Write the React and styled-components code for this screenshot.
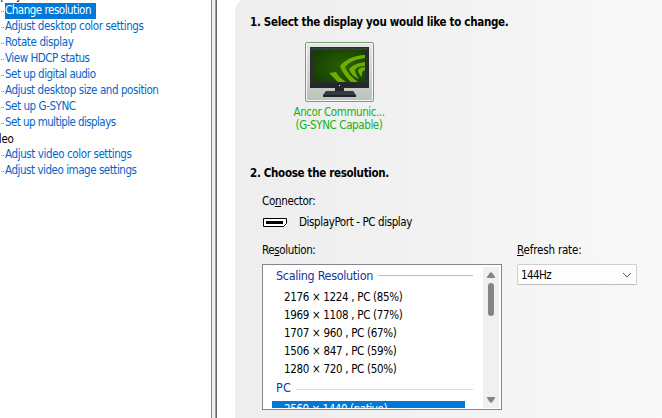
import React, { useLayoutEffect, useRef, useState } from "react";
import styled, { createGlobalStyle } from "styled-components";

const GlobalStyle = createGlobalStyle`
  * { box-sizing: border-box; }
  body { margin: 0; overflow: hidden; background: #fff; }
`;

const Window = styled.div`
  display: flex;
  width: 662px;
  height: 418px;
  overflow: hidden;
  background: #fff;
  color: #000;
  font: 11.5px/16px "DejaVu Sans Condensed", "DejaVu Sans", sans-serif;
  font-stretch: condensed;
`;

const Sidebar = styled.nav`
  width: 211px;
  height: 418px;
  overflow: hidden;
`;

const TreeRow = styled.div`
  display: flex;
  height: 16px;
  padding-left: ${(p) => (p.$group ? 0 : 1)}px;
`;

const GroupRow = styled(TreeRow)`
  margin-top: ${(p) => p.$top || 0}px;
  margin-left: ${(p) => p.$left || 0}px;
`;

const Branch = styled.span`
  flex: none;
  width: 4px;
  height: 1px;
  margin-top: 8px;
  background: repeating-linear-gradient(90deg, #8a8a8a 0 1px, transparent 1px 2px);
`;

const TreeLink = styled.a`
  height: 16px;
  padding-right: ${(p) => (p.$active ? 5 : 0)}px;
  background: ${(p) => (p.$active ? "#0078d7" : "transparent")};
  color: ${(p) => (p.$active ? "#fff" : "#0066cc")};
  line-height: 15px;
`;

const Splitter = styled.div`
  flex: none;
  width: 6px;
  height: 418px;
  background: #f0f0f0;
  border-left: 1px solid #868990;
  border-right: 1px solid #69696c;
  box-shadow: inset -1px 0 #a0a0a0;
`;

const Content = styled.main`
  flex: none;
  width: 427px;
  height: 424px;
  margin: -4px 0 0 18px;
  padding: 18px 0 0 15px;
  border-top-left-radius: 17px;
  background: linear-gradient(90deg, #eeeeee 0%, #f0f0f0 30%, #f4f4f4 60%, #f9f9f9 100%);
`;

const Heading = styled.h2`
  height: 16px;
  margin: 0;
  font-size: 11.5px;
  font-weight: 700;
  line-height: 17px;
`;

const Display = styled.div`
  display: flex;
  flex-direction: column;
  align-items: center;
  width: 100px;
  margin: 12px 0 0 39px;
  color: #12b212;
  line-height: 13px;
`;

const Thumbnail = styled.div`
  width: 69px;
  height: 60px;
  margin-bottom: 4px;
  border: 1px solid #75a16c;
  border-radius: 2px;
  background: linear-gradient(#e5e8e6, #bac3bc);
  box-shadow: inset 0 0 0 1px #f5f7f5;
`;

const ResolutionStep = styled.section`
  margin-top: 33px;
`;

const Label = styled.div`
  height: 16px;
`;

const Connector = styled.div`
  margin: 12px 0 0 12px;
`;

const Port = styled.div`
  display: flex;
  align-items: center;
  gap: 12px;
  height: 16px;
  margin-top: 5px;
`;

const Controls = styled.div`
  display: flex;
  gap: 15px;
  margin: 12px 0 0 12px;
`;

const Field = styled.div`
  width: ${(p) => p.$width}px;
`;

const ListBox = styled.div`
  display: flex;
  height: 146px;
  margin-top: 6px;
  padding: 1px;
  overflow: hidden;
  border: 1px solid #828790;
  background: #fff;
`;

const Items = styled.div`
  flex: 1;
  height: 142px;
  overflow: hidden;
`;

const GroupTitle = styled.div`
  display: flex;
  align-items: flex-start;
  gap: 5px;
  height: ${(p) => p.$height}px;
  padding: 2px 10px 0 12px;
  color: #1a349c;
  font-size: 12.5px;
  &::after {
    content: "";
    flex: 1;
    height: 1px;
    margin-top: ${(p) => p.$ruleTop}px;
    background: ${(p) => p.$rule};
  }
`;

const Item = styled.div`
  height: 18px;
  margin: 0 18px 0 8px;
  padding-left: 12px;
  background: ${(p) => (p.$selected ? "#0078d7" : "transparent")};
  color: ${(p) => (p.$selected ? "#fff" : "#000")};
  line-height: ${(p) => (p.$selected ? 17 : 18)}px;
`;

const Scrollbar = styled.div`
  display: flex;
  flex-direction: column;
  align-items: center;
  width: 16px;
  height: 141px;
  margin-right: 1px;
  margin-top: 1px;
  padding: 5px 0;
  background: #f0f0f0;
`;

const Thumb = styled.div`
  width: 6px;
  height: 33px;
  margin: 5px 0 auto;
  border-radius: 3px;
  background: #858585;
`;

const Select = styled.button`
  display: flex;
  align-items: center;
  justify-content: space-between;
  width: 120px;
  height: 21px;
  margin-top: 6px;
  padding: 0 4px 0 3px;
  border: 1px solid #d0d0d0;
  border-bottom-color: #bcbcbc;
  border-radius: 2px;
  background: #fdfdfd;
  color: #000;
  font: inherit;
`;

const TextRun = styled.span`
  display: inline-block;
  white-space: pre;
`;

/* Spreads a caption over a given width by adjusting its tracking. */
function Caption({ width, children }) {
  const ref = useRef(null);
  const [spacing, setSpacing] = useState(0);
  useLayoutEffect(() => {
    const node = ref.current;
    node.style.letterSpacing = "0px";
    const natural = node.getBoundingClientRect().width;
    const next = (width - natural) / node.textContent.length;
    node.style.letterSpacing = `${next}px`;
    setSpacing(next);
  }, [width]);
  return <TextRun ref={ref} style={{ letterSpacing: `${spacing}px` }}>{children}</TextRun>;
}

const Mnemonic = styled.span`
  text-decoration: underline;
  text-underline-offset: 1px;
  text-decoration-thickness: 1px;
  text-decoration-skip-ink: none;
`;

const displayTasks = [
  ["Change resolution", 86],
  ["Adjust desktop color settings", 138.5],
  ["Rotate display", 68.5],
  ["View HDCP status", 84.5],
  ["Set up digital audio", 90.5],
  ["Adjust desktop size and position", 153.5],
  ["Set up G-SYNC", 70.5],
  ["Set up multiple displays", 110.5],
];
const videoTasks = [
  ["Adjust video color settings", 126.5],
  ["Adjust video image settings", 131.5],
];
const scaled = [
  ["2176 × 1224 , PC (85%)", 118.5],
  ["1969 × 1108 , PC (77%)", 118.5],
  ["1707 × 960 , PC (67%)", 112.5],
  ["1506 × 847 , PC (59%)", 112.5],
  ["1280 × 720 , PC (50%)", 112.5],
];

function Monitor() {
  return (
    <svg width="67" height="58" viewBox="0 0 67 58" display="block">
      <defs>
        <radialGradient id="screen" cx=".6" cy=".5" r=".7">
          <stop offset="0" stopColor="#2a6300" />
          <stop offset="1" stopColor="#163d02" />
        </radialGradient>
        <clipPath id="glass"><rect x="7" y="7" width="52" height="32" /></clipPath>
      </defs>
      <path d="M4 4h59v41H4z" fill="#292d30" />
      <path d="M5 5h57v2H5z" fill="#363d41" />
      <rect x="7" y="7" width="52" height="32" fill="url(#screen)" />
      <g clipPath="url(#glass)" fill="#6fae00">
        <path d="M34 23C39 17 48 12 59 12v3C50 16 43 19 39 24c3 7 8 11 13 15h-7c-4-4-8-8-11-16z" />
        <path d="M43 26c4-4 9-6 16-7v4c-5 0-8 1-10 4 0 3 2 6 4 9-5-2-8-5-10-10z" />
        <path d="M52 27c1-2 4-3 7-3v3l-3 2v5c-2-2-4-4-4-7z" />
        <path d="M23 30l7-1c2 4 6 7 10 10h-8z" />
      </g>
      <path d="M4 40h59v5H4z" fill="#24282b" />
      <rect x="33" y="42" width="1" height="1" fill="#fff" />
      <path d="M29 45h9v4h-9z" fill="#22272a" />
      <path d="M20 48h27l3 4v2H17v-2z" fill="#343a3e" />
      <path d="M17 52h33v2H17z" fill="#202426" />
    </svg>
  );
}

function Task({ text, width, active }) {
  return (
    <TreeRow>
      <Branch />
      <TreeLink $active={active}><Caption width={width}>{text}</Caption></TreeLink>
    </TreeRow>
  );
}

export default function App() {
  return (
    <Window>
      <GlobalStyle />
      <Sidebar>
        <GroupRow $group $top={-13} $left={-16}><Caption width={38}>Display</Caption></GroupRow>
        {displayTasks.map(([t, w], i) => <Task key={t} text={t} width={w} active={i === 0} />)}
        <GroupRow $group $left={-14}><Caption width={27.5}>Video</Caption></GroupRow>
        {videoTasks.map(([t, w]) => <Task key={t} text={t} width={w} />)}
      </Sidebar>
      <Splitter />
      <Content>
        <Heading><Caption width={258.5}>1. Select the display you would like to change.</Caption></Heading>
        <Display>
          <Thumbnail><Monitor /></Thumbnail>
          <Caption width={91}>Ancor Communic...</Caption>
          <Caption width={87}>(G-SYNC Capable)</Caption>
        </Display>
        <ResolutionStep>
          <Heading><Caption width={139}>2. Choose the resolution.</Caption></Heading>
          <Connector>
            <Label><Caption width={53.5}>Co<Mnemonic>n</Mnemonic>nector:</Caption></Label>
            <Port>
              <svg width="25" height="11" viewBox="0 0 25 11">
                <path d="M1.5 1.5h23v5l-3 3h-20z" fill="#fff" stroke="#000" />
                <path d="M4 4h17v3H4z" />
              </svg>
              <Caption width={113}>DisplayPort - PC display</Caption>
            </Port>
          </Connector>
          <Controls>
            <Field $width={240}>
              <Label><Caption width={53.5}>Re<Mnemonic>s</Mnemonic>olution:</Caption></Label>
              <ListBox>
                <Items>
                  <GroupTitle $height={22} $rule="#a9bfe8" $ruleTop={7}><Caption width={97}>Scaling Resolution</Caption></GroupTitle>
                  {scaled.map(([t, w]) => <Item key={t}><Caption width={w}>{t}</Caption></Item>)}
                  <GroupTitle $height={23} $rule="#d3dfee" $ruleTop={9}><Caption width={15}>PC</Caption></GroupTitle>
                  <Item $selected><Caption width={103}>2560 × 1440 (native)</Caption></Item>
                </Items>
                <Scrollbar>
                  <svg width="8" height="6" viewBox="0 0 8 6"><path d="M0 6V5l3-4.5h2L8 5v1z" fill="#858585" /></svg>
                  <Thumb />
                  <svg width="8" height="6" viewBox="0 0 8 6"><path d="M0 0v1l3 4.5h2L8 1V0z" fill="#858585" /></svg>
                </Scrollbar>
              </ListBox>
            </Field>
            <Field $width={120}>
              <Label><Caption width={64.5}><Mnemonic>R</Mnemonic>efresh rate:</Caption></Label>
              <Select>
                <Caption width={30}>144Hz</Caption>
                <svg width="10" height="6" viewBox="0 0 10 6"><path d="M1 1l4 4 4-4" fill="none" stroke="#555" /></svg>
              </Select>
            </Field>
          </Controls>
        </ResolutionStep>
      </Content>
    </Window>
  );
}
